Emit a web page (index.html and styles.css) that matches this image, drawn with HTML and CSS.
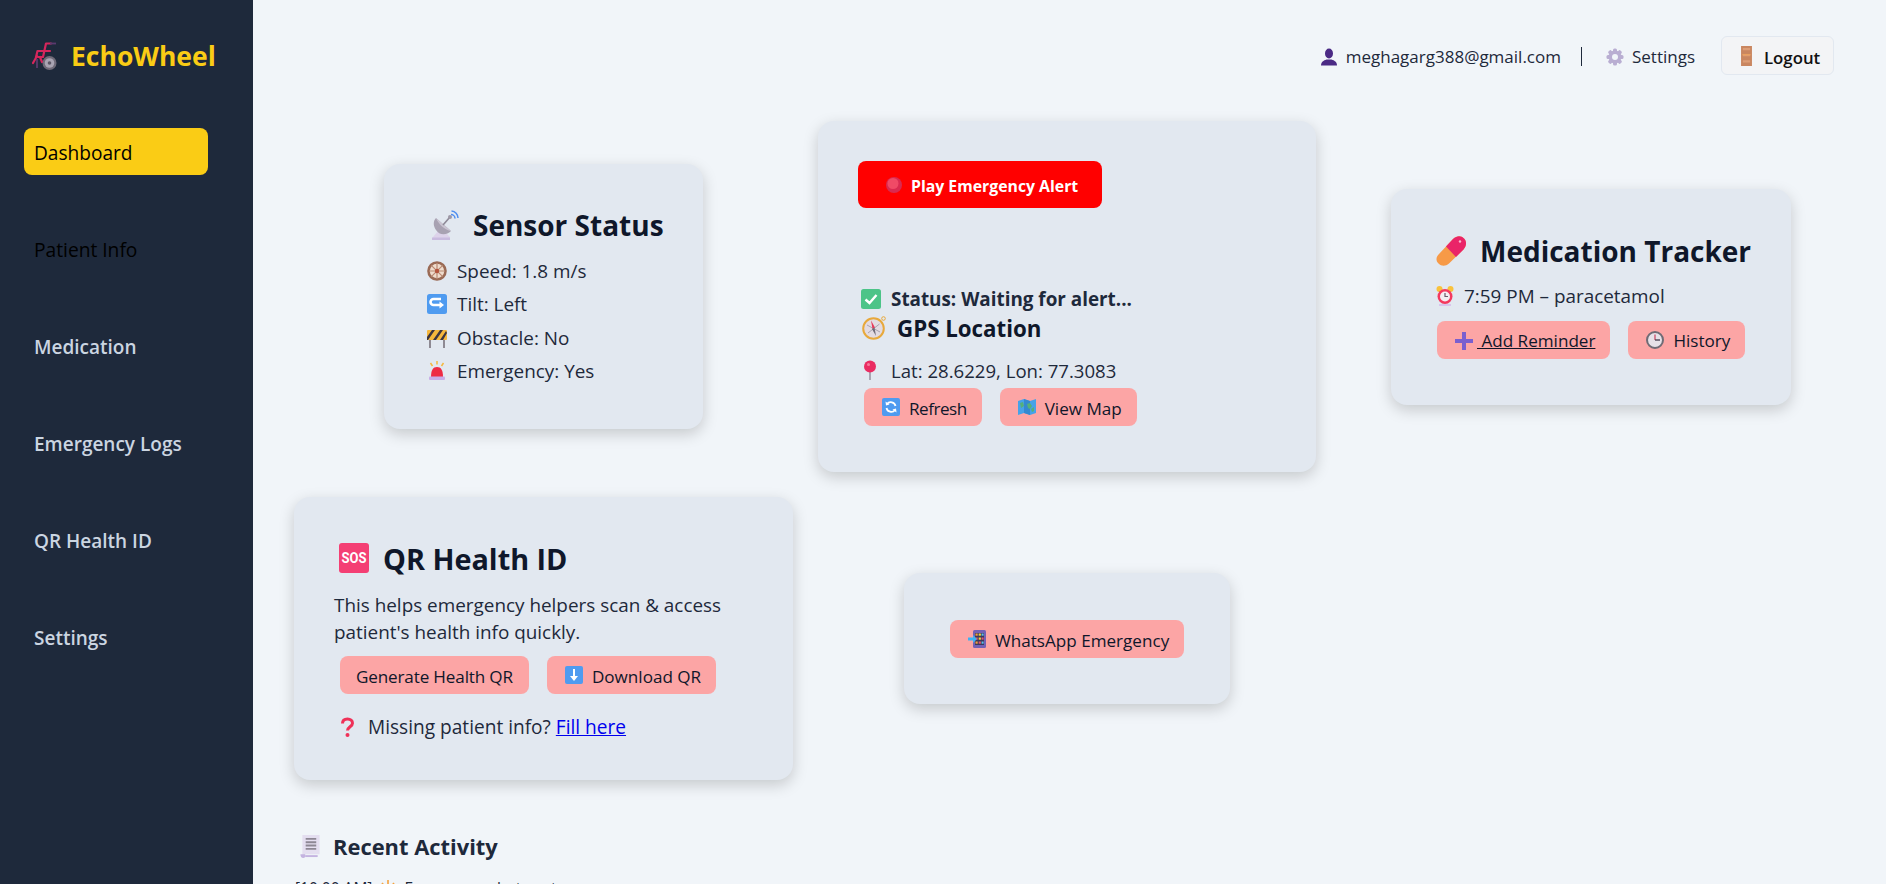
FILE: index.html
```html
<!DOCTYPE html>
<html lang="en">
<head>
<meta charset="utf-8">
<title>EchoWheel</title>
<link rel="stylesheet" href="styles.css">
</head>
<body>
<div class="app">
  <aside class="sidebar">
    <div class="logo">
      <svg class="ic-logo" viewBox="0 0 26 28"><g fill="none" stroke="#d6265c" stroke-width="2.200" stroke-linecap="round" stroke-linejoin="round"><path d="M19 1.500H14L11 15H6"/><path d="M5.500 9H18M5.500 9L4 15M5 14L1 21M8 15L10 20"/></g><path d="M5 17v9" stroke="#5b3a6e" stroke-width="1.800"/><path d="M18 1.500h6" stroke="#5b3a6e" stroke-width="1.800"/><circle cx="17.500" cy="21" r="7" fill="#6f6a78"/><circle cx="17.500" cy="21" r="4.800" fill="#a9a4b2"/><circle cx="17.500" cy="21" r="1.800" fill="#5c5866"/></svg>
      <span>EchoWheel</span>
    </div>
    <nav class="nav">
      <a class="nav-item active">Dashboard</a>
      <a class="nav-item dark">Patient Info</a>
      <a class="nav-item">Medication</a>
      <a class="nav-item">Emergency Logs</a>
      <a class="nav-item">QR Health ID</a>
      <a class="nav-item">Settings</a>
    </nav>
  </aside>
  <main class="main">
    <header class="topbar">
      <span class="top-item">
        <svg class="ic-person" viewBox="0 0 16 18"><ellipse cx="8" cy="5.500" rx="4" ry="5" fill="#4b2a85"/><path d="M0 17.500c0-3.500 2.500-5 5.500-6h5c3 1 5.500 2.500 5.500 6z" fill="#4b2a85"/></svg>
        meghagarg388@gmail.com
      </span>
      <span class="sep"></span>
      <span class="top-item gear">
        <svg class="ic-top" viewBox="0 0 18 18"><g fill="#b9aed2"><circle cx="9" cy="9" r="6.500"/><rect x="7" y="0.500" width="4" height="17" rx="1.500"/><rect x="7" y="0.500" width="4" height="17" rx="1.500" transform="rotate(45 9 9)"/><rect x="7" y="0.500" width="4" height="17" rx="1.500" transform="rotate(90 9 9)"/><rect x="7" y="0.500" width="4" height="17" rx="1.500" transform="rotate(135 9 9)"/></g><circle cx="9" cy="9" r="3" fill="#f1f5f9"/></svg>
        Settings
      </span>
      <button class="logout">
        <svg class="ic-door" viewBox="0 0 12 22"><rect width="12" height="22" fill="#c98660"/><path d="M2 3.500h8M2 10h8M2 17h8" stroke="#dd9d76" stroke-width="2.500"/><path d="M1.500 9.500h9" stroke="#e9a060" stroke-width="1.500"/></svg>
        <span class="logout-text">Logout</span>
      </button>
    </header>

    <section class="row row-one">
      <article class="card sensor">
        <h2 class="title title-sensor">
          <svg class="ic-title" viewBox="0 0 28 30"><path d="M1 30l1-3 6-7h4l7 7v3z" fill="#ddd3ea"/><rect x="1" y="27.500" width="18" height="2.500" fill="#c9bbdf"/><path d="M5 8L20 21C15 26 8 25 5 20 2 16 2 11 5 8z" fill="#a8a2b2"/><path d="M5 8L20 21C14 20 8 15 5 8z" fill="#cac4d2"/><path d="M12 15l7-8" stroke="#8f8a98" stroke-width="1.600"/><circle cx="19" cy="7" r="2" fill="#9d98a6"/><g fill="none" stroke="#4f8ef0" stroke-width="1.500"><path d="M20 4.500a4 4 0 0 1 4 4"/><path d="M20.500 1a7 7 0 0 1 6.500 7"/></g></svg>
          Sensor Status
        </h2>
        <p class="line">
          <svg class="ic-line" viewBox="0 0 20 20"><circle cx="10" cy="10" r="8.500" fill="#efdccd" stroke="#9a6a55" stroke-width="2.600"/><g stroke="#b98a72" stroke-width="1.200"><path d="M10 2v16M2 10h16M4.300 4.300l11.400 11.400M15.700 4.300L4.300 15.700"/></g><circle cx="10" cy="10" r="2.200" fill="#b5533c"/></svg>
          Speed: 1.8 m/s
        </p>
        <p class="line">
          <svg class="ic-line" viewBox="0 0 20 20"><rect width="20" height="20" rx="2.500" fill="#4f9bf0"/><path d="M14 5H6.500a3 3 0 0 0 0 6H15" fill="none" stroke="#fff" stroke-width="2.600"/><path d="M12.500 7.500L17 11l-4.500 3.500z" fill="#fff"/></svg>
          Tilt: Left
        </p>
        <p class="line">
          <svg class="ic-line" viewBox="0 0 20 20"><path d="M3 12v8M17 12v8" stroke="#8e8a93" stroke-width="2"/><rect y="2" width="20" height="10" rx="1" fill="#f6b73c"/><path d="M0 9l5-7h3l-7 10H0zM6 12l7-10h3l-7 10zM13 12l6-9 1 2-4 7z" fill="#3c3440"/></svg>
          Obstacle: No
        </p>
        <p class="line">
          <svg class="ic-line" viewBox="0 0 20 20"><path d="M4 16c0-7 2-10 6-10s6 3 6 10z" fill="#ee2b44"/><rect x="2" y="15.500" width="16" height="3.500" rx="1" fill="#c8aee8"/><path d="M10 0v3.500M3.500 2l2 3M16.500 2l-2 3" stroke="#f5b83d" stroke-width="1.500"/></svg>
          Emergency: Yes
        </p>
      </article>

      <article class="card gps">
        <button class="alert">
          <svg class="ic-dot" viewBox="0 0 16 16"><circle cx="8" cy="8" r="8" fill="#d92a50"/><circle cx="7" cy="6.500" r="5.500" fill="#f04a66"/></svg>
          <span class="btn-text">Play Emergency Alert</span>
        </button>
        <p class="status">
          <svg class="ic-line" viewBox="0 0 20 20"><rect width="20" height="20" rx="2.500" fill="#4cc488"/><path d="M4.500 10.500l4 3.500 7-8" fill="none" stroke="#fff" stroke-width="2.400"/></svg>
          Status: Waiting for alert...
        </p>
        <h3 class="subtitle">
          <svg class="ic-sub" viewBox="0 0 24 24"><circle cx="21.500" cy="2.500" r="1.800" fill="none" stroke="#e8a93c" stroke-width="1"/><circle cx="11.500" cy="12.500" r="10.300" fill="#e3dbe2" stroke="#e8a93c" stroke-width="2"/><path d="M5 9l13 7M17.500 8L6 17" stroke="#a9a3b0" stroke-width="1"/><path d="M9 4.500l4 7-2.500 1.500z" fill="#e83a5b"/><path d="M14 20l-4-7 2.500-1.500z" fill="#6f6a78"/></svg>
          GPS Location
        </h3>
        <p class="line coords">
          <svg class="ic-pin" viewBox="0 0 14 20"><path d="M7 11v9" stroke="#a39dab" stroke-width="1.800"/><circle cx="7" cy="6.500" r="6" fill="#ea2c62"/><circle cx="5.500" cy="4.500" r="1.500" fill="#f77a9c"/></svg>
          Lat: 28.6229, Lon: 77.3083
        </p>
        <div class="actions act-gps">
          <button class="btn">
            <svg class="ic-btn" viewBox="0 0 18 18"><rect width="18" height="18" rx="2" fill="#4f9bf0"/><path d="M13.500 8A4.800 4.800 0 0 0 5 6M4.500 10A4.800 4.800 0 0 0 13 12" fill="none" stroke="#fff" stroke-width="1.800"/><path d="M3.500 3.500l.5 4 3.500-1zM14.500 14.500l-.5-4-3.500 1z" fill="#fff"/></svg>
            <span class="btn-text tight">Refresh</span>
          </button>
          <button class="btn">
            <svg class="ic-btn" viewBox="0 0 18 18"><path d="M0 3l6-2 6 2 6-2v14l-6 2-6-2-6 2z" fill="#46a2e8"/><path d="M6 1v14l6 2V3z" fill="#3489d0"/><path d="M2 5l3-1 1 4-3 2zM9 6l3-1 2 3-2 3-2-1zM13 11l3-2v4l-2 1z" fill="#55b07a"/></svg>
            <span class="btn-text">View Map</span>
          </button>
        </div>
      </article>

      <article class="card med">
        <h2 class="title">
          <svg class="ic-pill" viewBox="0 0 30 30"><path d="M3 18L17 3c4-3.500 8-3.500 11-.5s2.500 7.500-.5 11L13 27.500c-3.500 3-7.500 3-10.500 0s-2.500-6.500.5-9.500z" fill="#f79a47"/><path d="M10 10.500L17 3c4-3.500 8-3.500 11-.5s2.500 7.500-.5 11L20 21z" fill="#ea2468"/><circle cx="24" cy="5.500" r="1.200" fill="#fbb6ce"/></svg>
          Medication Tracker
        </h2>
        <p class="line time">
          <svg class="ic-clock" viewBox="0 0 18 20"><circle cx="3.500" cy="3" r="3" fill="#f9c23c"/><circle cx="14.500" cy="3" r="3" fill="#f9c23c"/><path d="M3 19h12" stroke="#d8c5ec" stroke-width="2"/><circle cx="9" cy="10.500" r="7.500" fill="#f4395f"/><circle cx="9" cy="10.500" r="5" fill="#f4eef2"/><path d="M9 7v3.500h3" fill="none" stroke="#6b5b6b" stroke-width="1.200"/></svg>
          7:59 PM – paracetamol
        </p>
        <div class="actions act-med">
          <a class="btn btn-link"><span class="under btn-text"><svg class="ic-plus" viewBox="0 0 18 18"><path d="M7 0h4v7h7v4h-7v7H7v-7H0V7h7z" fill="#7a5fcf"/></svg> Add Reminder</span></a>
          <button class="btn">
            <svg class="ic-btn" viewBox="0 0 18 18"><circle cx="9" cy="9" r="8" fill="#e6e1e8" stroke="#6f6b75" stroke-width="2"/><path d="M9 3.500V9" stroke="#c9405d" stroke-width="1.200"/><path d="M9 9h5" stroke="#4d4656" stroke-width="1.400"/></svg>
            <span class="btn-text">History</span>
          </button>
        </div>
      </article>
    </section>

    <section class="row row-two">
      <article class="card qr">
        <h2 class="title title-qr">
          <svg class="ic-title-sos" viewBox="0 0 30 30"><rect width="30" height="30" rx="3" fill="#f43f74"/><text x="15" y="20" class="sos" textLength="25" lengthAdjust="spacingAndGlyphs">SOS</text></svg>
          QR Health ID
        </h2>
        <p class="para">This helps emergency helpers scan &amp; access<br>patient's health info quickly.</p>
        <div class="actions act-qr">
          <button class="btn btn-plain"><span class="btn-text tight-soft">Generate Health QR</span></button>
          <button class="btn">
            <svg class="ic-btn" viewBox="0 0 18 18"><rect width="18" height="18" rx="2" fill="#4f9bf0"/><path d="M9 3v8" stroke="#fff" stroke-width="2"/><path d="M5 10h8l-4 5z" fill="#fff"/></svg>
            <span class="btn-text">Download QR</span>
          </button>
        </div>
        <p class="line missing">
          <svg class="ic-q" viewBox="0 0 15 20"><path d="M2.500 6.500C2.500 3.500 4.500 2 7.500 2s5 1.800 5 4.200c0 3.300-5 3.800-5 7.300" fill="none" stroke="#ef3158" stroke-width="3"/><circle cx="7.500" cy="18" r="2" fill="#ef3158"/></svg>
          <span>Missing patient info? <a class="link" href="#">Fill here</a></span>
        </p>
      </article>

      <article class="card wa">
        <button class="btn">
          <svg class="ic-btn" viewBox="0 0 18 18"><rect x="5" width="13" height="18" rx="1.500" fill="#7360b5"/><rect x="7" y="3" width="9" height="12" fill="#3c3a5c"/><g fill="#f2a03c"><rect x="7.500" y="3.500" width="2.200" height="2.200"/><rect x="7.500" y="11.500" width="2.200" height="2.200"/></g><g fill="#f4d13d"><rect x="10.700" y="3.500" width="2.200" height="2.200"/><rect x="10.700" y="7.500" width="2.200" height="2.200"/></g><g fill="#5bc0eb"><rect x="13.600" y="3.500" width="2" height="2.200"/><rect x="13.600" y="11.500" width="2" height="2.200"/></g><g fill="#e8506e"><rect x="7.500" y="7.500" width="2.200" height="2.200"/><rect x="13.600" y="7.500" width="2" height="2.200"/><rect x="10.700" y="11.500" width="2.200" height="2.200"/></g><path d="M0 7.500h5V5l4 4-4 4v-2.500H0z" fill="#3fb1f2"/></svg>
          <span class="btn-text">WhatsApp Emergency</span>
        </button>
      </article>
    </section>

    <section class="recent">
      <h3 class="recent-title">
        <svg class="ic-receipt" viewBox="0 0 20 24"><path d="M2 0h18v20H5v3H2z" fill="#e4def0"/><path d="M0 20h5v2.500c0 1-1 1.500-2 1.500-2 0-3-1.500-3-4z" fill="#c4b3e0"/><path d="M5 21h13v2H5z" fill="#c4b3e0"/><path d="M5.500 4h11M5.500 7.500h11M5.500 11h11M5.500 14.500h11" stroke="#8d8794" stroke-width="2"/></svg>
        Recent Activity
      </h3>
      <p class="log">[10:00 AM]
        <svg class="ic-burst" viewBox="0 0 14 16"><path d="M7 0v6M1 3l4 5M13 3L9 8M0 9h5M14 9H9" stroke="#f5a23c" stroke-width="1.600"/><circle cx="7" cy="9" r="2.400" fill="#e8506e"/></svg>
        Emergency alert sent
      </p>
    </section>
  </main>
</div>
</body>
</html>
```

FILE: styles.css
```css
* { box-sizing: border-box; }
html, body { margin: 0; height: 100%; }
body {
  font-family: "Open Sans", "Noto Sans", "Liberation Sans", sans-serif;
  background: #f1f5f9;
  color: #1e293b;
  overflow: hidden;
}
p, h2, h3 { margin: 0; }
svg { flex: none; }
.app { display: flex; height: 884px; overflow: hidden; }

.sidebar { width: 253px; flex: none; background: #1e293b; padding: 41px 45px 0 24px; }
.logo { display: flex; align-items: center; gap: 13px; height: 30px; margin-left: 8px; color: #facc15; font-size: 26.500px; font-weight: 700; white-space: nowrap; }
.ic-logo { width: 26px; height: 28px; }
.nav { display: flex; flex-direction: column; gap: 50px; margin-top: 57px; }
.nav-item { display: flex; align-items: center; height: 47px; padding: 2px 10px 0; border-radius: 8px; color: #cbd5e1; font-size: 19px; font-weight: 600; white-space: nowrap; }
.nav-item.active { background: #facc15; color: #000; font-size: 19.100px; font-weight: 500; }
.nav-item.dark { color: #000; font-size: 19.200px; font-weight: 500; }

.main { flex: 1; min-width: 0; padding: 36px 52px 0 0; }
.topbar { display: flex; justify-content: flex-end; align-items: center; height: 39px; font-size: 17px; }
.top-item { display: flex; align-items: center; gap: 9px; margin-top: 2px; white-space: nowrap; }
.gear { gap: 8px; }
.ic-top { width: 18px; height: 18px; }
.ic-person { width: 16px; height: 18px; }
.sep { width: 1px; height: 19px; background: #1e293b; margin: 2px 24px 0 20px; }
.logout { display: flex; align-items: center; gap: 12px; height: 39px; width: 113px; margin-left: 26px; padding: 0 0 0 19px; border: 1px solid #e2e8f0; border-radius: 6px; background: #f3f4f6; color: #111; font: 600 16.800px "Open Sans", sans-serif; }
.logout-text { padding-top: 3px; }
.ic-door { width: 11px; height: 20px; }

.row { display: flex; align-items: center; }
.row-one { margin-top: 46px; }
.row-two { margin-top: 25px; }
.card { flex: none; background: #e2e8f0; border-radius: 16px; box-shadow: 0 5px 15px rgba(0, 0, 0, .18); }
.sensor { width: 319px; margin-left: 131px; padding: 42px 43px 41px; }
.gps { width: 498px; margin-left: 115px; padding: 40px 40px 46px; }
.med { width: 400px; margin-left: 75px; padding: 43px 45px 46px; }
.qr { width: 499px; margin-left: 41px; padding: 42px 40px 40px; }
.wa { width: 326px; margin-left: 111px; padding: 47px 46px 46px; }

.title { display: flex; align-items: center; gap: 14px; height: 38px; color: #0f172a; font-size: 28px; font-weight: 700; white-space: nowrap; }
.title-sensor { margin-left: 4px; margin-bottom: 10px; }
.title-qr { margin-left: 5px; font-size: 28.800px; }
.ic-title { width: 28px; height: 30px; }
.ic-pill, .ic-title-sos { width: 30px; height: 30px; }
.sos { fill: #fff; font: 700 14px "Roboto", sans-serif; text-anchor: middle; }

.line { display: flex; align-items: center; gap: 10px; height: 33.300px; font-size: 18.900px; white-space: nowrap; }
.ic-line { width: 20px; height: 20px; }
.alert { display: flex; align-items: center; gap: 9px; height: 47px; width: 244px; padding: 0 0 0 28px; border: 0; border-radius: 8px; background: #f00; color: #fff; font: 700 15.800px "Open Sans", sans-serif; white-space: nowrap; }
.ic-dot { width: 16px; height: 16px; }
.status { display: flex; align-items: center; gap: 10px; height: 26px; margin: 78px 0 0 3px; font-size: 18.850px; font-weight: 700; white-space: nowrap; }
.subtitle { display: flex; align-items: center; gap: 11px; height: 32px; margin-left: 4px; color: #0f172a; font-size: 22.300px; font-weight: 700; }
.ic-sub { width: 24px; height: 24px; }
.coords { height: 26px; margin: 13px 0 0 5px; gap: 14px; font-size: 18.600px; }
.act-gps { margin: 5px 0 0 6px; }
.ic-pin { width: 14px; height: 20px; }
.actions { display: flex; gap: 18px; }
.act-med { margin: 12px 0 0 1px; }
.act-qr { margin: 10px 0 0 6px; }
.btn { display: inline-flex; align-items: center; gap: 9px; height: 38px; padding: 0 15px 0 18px; border: 0; border-radius: 8px; background: #fca5a5; color: #0f172a; font: 500 17.100px "Open Sans", sans-serif; white-space: nowrap; }
.btn-plain { padding: 0 16px; }
.btn-link { padding: 0 15px; }
.btn-text { padding-top: 2px; }
.tight { letter-spacing: -.5px; }
.tight-soft { letter-spacing: -.15px; }
.ic-btn { width: 18px; height: 18px; }
.under { text-decoration: underline; }
.ic-plus { width: 18px; height: 18px; vertical-align: -3px; margin-left: 3px; margin-right: 4px; }
.time { height: 26px; margin-top: 13px; }
.ic-clock { width: 18px; height: 20px; }
.para { margin-top: 15px; font-size: 18.900px; line-height: 27px; }
.missing { height: 26px; margin: 20px 0 0 6px; gap: 13px; font-size: 19.100px; }
.ic-q { width: 15px; height: 20px; }
.link { color: #00e; text-decoration: underline; }

.recent { margin: 55px 0 0 47px; }
.recent-title { display: flex; align-items: center; gap: 13px; height: 22px; font-size: 21.900px; font-weight: 700; }
.ic-receipt { width: 20px; height: 23px; }
.log { display: flex; align-items: center; gap: 9px; margin: 20px 0 0 -5px; font-size: 15.500px; white-space: nowrap; }
.ic-burst { width: 14px; height: 16px; }
```
